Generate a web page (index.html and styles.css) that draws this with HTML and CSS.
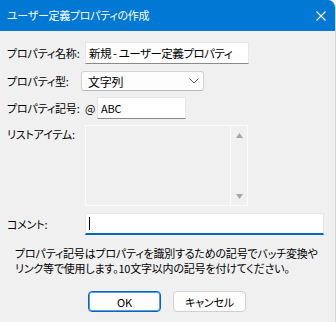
FILE: index.html
```html
<!DOCTYPE html>
<html>
<head>
  <meta charset="utf-8">
  <title>ユーザー定義プロパティの作成</title>
  <link rel="stylesheet" href="styles.css">
</head>
<body>
  <div class="window">
    <div class="titlebar">
      <span class="title">ユーザー定義プロパティの作成</span>
      <svg class="close" width="10" height="10" viewBox="0 0 10 10">
        <path d="M0.5 0.5 L9.5 9.5 M9.5 0.5 L0.5 9.5" stroke="#fff" stroke-width="1.1" fill="none"/>
      </svg>
    </div>
    <div class="content">
      <div class="row row-name">
        <label class="label">プロパティ名称:</label>
        <div class="input name-input">新規 - ユーザー定義プロパティ</div>
      </div>
      <div class="row row-type">
        <label class="label">プロパティ型:</label>
        <div class="select">
          <span>文字列</span>
          <svg width="10" height="6" viewBox="0 0 10 6">
            <path d="M0.5 0.5 L5 5 L9.5 0.5" stroke="#5f5f5f" stroke-width="1" fill="none"/>
          </svg>
        </div>
      </div>
      <div class="row row-code">
        <label class="label">プロパティ記号:</label>
        <span class="at">@</span>
        <div class="input code-input">ABC</div>
      </div>
      <div class="row row-list">
        <label class="label">リストアイテム:</label>
        <div class="listbox">
          <div class="list-body"></div>
          <div class="scrollbar">
            <svg width="7" height="5" viewBox="0 0 7 5"><path d="M3.5 0 L7 5 L0 5 Z" fill="#a6a6a6"/></svg>
            <svg width="7" height="5" viewBox="0 0 7 5"><path d="M0 0 L7 0 L3.5 5 Z" fill="#a6a6a6"/></svg>
          </div>
        </div>
      </div>
      <div class="row row-comment">
        <label class="label">コメント:</label>
        <div class="input comment-input"><span class="caret"></span></div>
      </div>
      <p class="help">プロパティ記号はプロパティを識別するための記号でバッチ変換や<br>リンク等で使用します。10文字以内の記号を付けてください。</p>
      <div class="buttons">
        <button class="btn btn-ok">OK</button>
        <button class="btn">キャンセル</button>
      </div>
    </div>
  </div>
</body>
</html>
```

FILE: styles.css
```css
* {
  box-sizing: border-box;
}
body {
  margin: 0;
  font-family: "Noto Sans CJK JP", "Noto Sans", sans-serif;
  font-feature-settings: "palt";
  font-size: 11px;
  letter-spacing: -0.2px;
  color: #000;
}
.window {
  width: 336px;
  height: 322px;
  background-color: #f0f0f0;
  border-right: 1px solid #d6d6d6;
  border-top-right-radius: 8px;
  overflow: hidden;
}
.titlebar {
  height: 31px;
  background-color: #0078d4;
  color: white;
  display: flex;
  align-items: center;
  justify-content: space-between;
  padding: 0 9px 0 7px;
}
.title {
  font-size: 11px;
  letter-spacing: -0.3px;
  line-height: 1;
}
.content {
  padding: 11px 11px 0 7px;
}
.row {
  display: flex;
  align-items: center;
  white-space: nowrap;
}
.label {
  width: 78px;
  flex-shrink: 0;
}
.input {
  background-color: white;
  border: 1px solid #e6e6e6;
  border-bottom-color: #8a8a8a;
  height: 22px;
  display: flex;
  align-items: center;
  padding: 0 3px;
  white-space: nowrap;
  overflow: hidden;
}
.name-input {
  width: 164px;
  font-size: 11.5px;
  letter-spacing: -0.5px;
}
.row-type {
  margin-top: 7px;
}
.row-type .label {
  width: 74px;
}
.select {
  width: 123px;
  height: 20px;
  background-color: #fdfdfd;
  border: 1px solid #d3d3d3;
  border-bottom-color: #b8b8b8;
  border-radius: 3px;
  display: flex;
  align-items: center;
  justify-content: space-between;
  padding: 0 4px 0 6px;
  font-size: 12px;
}
.row-code {
  margin-top: 6px;
}
.at {
  width: 12px;
  flex-shrink: 0;
}
.code-input {
  width: 89px;
  padding-left: 3px;
}
.row-list {
  margin-top: 6px;
  align-items: flex-start;
}
.row-list .label {
  padding-top: 1px;
}
.listbox {
  width: 163px;
  height: 81px;
  border: 1px solid #fbfbfb;
  display: flex;
}
.list-body {
  flex: 1;
}
.scrollbar {
  width: 17px;
  border-left: 1px solid #fbfbfb;
  display: flex;
  flex-direction: column;
  justify-content: space-between;
  align-items: center;
  padding: 7px 0 6px;
}
.row-comment {
  margin-top: 7px;
}
.comment-input {
  width: 239px;
  border-bottom: 2px solid #0067c0;
  padding-left: 3px;
}
.caret {
  width: 1px;
  height: 13px;
  background-color: #000;
}
.help {
  margin: 11px 0 0 8px;
  line-height: 15px;
  white-space: nowrap;
}
.buttons {
  display: flex;
  gap: 12px;
  margin-top: 15px;
  padding-left: 81px;
}
.btn {
  width: 73px;
  height: 21px;
  font-family: inherit;
  font-feature-settings: "palt";
  font-size: 11px;
  letter-spacing: -0.2px;
  background-color: #fdfdfd;
  border: 1px solid #d0d0d0;
  border-radius: 4px;
  padding: 0;
  color: #000;
}
.btn-ok {
  border: 1px solid #0067c0;
  box-shadow: inset 0 0 0 1px #5a9be0;
}
```
